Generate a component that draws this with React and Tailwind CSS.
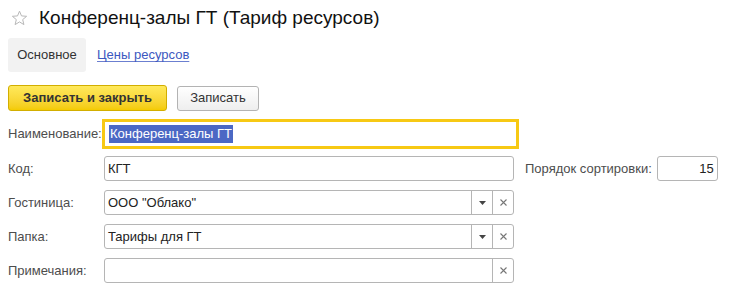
import React from 'react';

function Star() {
  return (
    <svg width="17" height="16" viewBox="0 0 17 16" className="shrink-0">
      <path
        d="M8.5 1.2 L10.5 5.9 L15.6 6.3 L11.7 9.6 L12.9 14.6 L8.5 11.9 L4.1 14.6 L5.3 9.6 L1.4 6.3 L6.5 5.9 Z"
        fill="none"
        stroke="#b8b8b8"
        strokeWidth="1"
        strokeLinejoin="round"
      />
    </svg>
  );
}

function DropBtn() {
  return (
    <div className="w-[21px] h-full border-l border-[#b5b5b5] flex items-center justify-center">
      <svg width="7" height="4" viewBox="0 0 7 4">
        <path d="M0 0 H7 L3.5 4 Z" fill="#444" />
      </svg>
    </div>
  );
}

function ClearBtn() {
  return (
    <div className="w-[21px] h-full border-l border-[#b5b5b5] flex items-center justify-center">
      <svg width="7" height="7" viewBox="0 0 7 7">
        <path d="M0.5 0.5 L6.5 6.5 M6.5 0.5 L0.5 6.5" stroke="#777" strokeWidth="1.1" />
      </svg>
    </div>
  );
}

function Row({ label, children, className = '' }) {
  return (
    <div className={'flex items-center ' + className}>
      <div className="w-[96px] shrink-0 text-[13px] text-[#4d4d4d]">{label}</div>
      {children}
    </div>
  );
}

function Field({ value, drop, clear, width = 'w-[410px]' }) {
  return (
    <div className={width + ' h-[25px] border border-[#b5b5b5] rounded-[3px] bg-white flex items-stretch'}>
      <div className="flex-1 px-[3px] flex items-center text-[13px] text-[#222] leading-none">{value}</div>
      {drop && <DropBtn />}
      {clear && <ClearBtn />}
    </div>
  );
}

export default function App() {
  return (
    <div
      className="w-[744px] h-[293px] bg-white overflow-hidden pl-[8px] pt-[5px]"
      style={{ fontFamily: '"Liberation Sans", Arial, sans-serif' }}
    >
      <div className="flex items-center h-[25px] gap-[11px] pl-[3px]">
        <Star />
        <h1 className="text-[19px] text-[#111] leading-none">Конференц-залы ГТ (Тариф ресурсов)</h1>
      </div>

      <div className="flex items-center mt-[8px] h-[34px]">
        <div className="h-full w-[78px] bg-[#f2f2f2] rounded-[3px] flex items-center justify-center text-[13px] text-[#333]">
          Основное
        </div>
        <a className="ml-[11px] text-[13px] text-[#3c58c0] underline underline-offset-2 decoration-[#6b7fd0]">
          Цены ресурсов
        </a>
      </div>

      <div className="flex items-center gap-[10px] mt-[13px] h-[26px]">
        <button className="h-full w-[159px] rounded-[3px] border border-[#d2ae00] bg-gradient-to-b from-[#ffe95a] to-[#f4cb00] text-[13px] font-bold text-[#333]">
          Записать и закрыть
        </button>
        <button className="h-[25px] w-[82px] rounded-[3px] border border-[#b3b3b3] bg-gradient-to-b from-white to-[#eeeeee] text-[13px] text-[#333]">
          Записать
        </button>
      </div>

      <div className="flex items-center mt-[8px] h-[30px]">
        <div className="w-[94px] shrink-0 text-[13px] text-[#4d4d4d]">Наименование:</div>
        <div className="w-[417px] h-[30px] border-[3px] border-[#f7c914] bg-white flex items-center px-[4px]">
          <span className="bg-[#4b68c4] text-white text-[13px] leading-[18px] px-[1px]">Конференц-залы ГТ</span>
        </div>
      </div>

      <Row label="Код:" className="mt-[7px] h-[25px]">
        <Field value="КГТ" />
        <div className="ml-[11px] text-[13px] text-[#4d4d4d]">Порядок сортировки:</div>
        <div className="ml-[5px] w-[61px] h-[25px] border border-[#b5b5b5] rounded-[3px] flex items-center justify-end pr-[3px] text-[13px] text-[#222]">
          15
        </div>
      </Row>

      <Row label="Гостиница:" className="mt-[9px] h-[25px]">
        <Field value={'ООО "Облако"'} drop clear />
      </Row>

      <Row label="Папка:" className="mt-[9px] h-[25px]">
        <Field value="Тарифы для ГТ" drop clear />
      </Row>

      <Row label="Примечания:" className="mt-[9px] h-[25px]">
        <Field value="" clear />
      </Row>
    </div>
  );
}
